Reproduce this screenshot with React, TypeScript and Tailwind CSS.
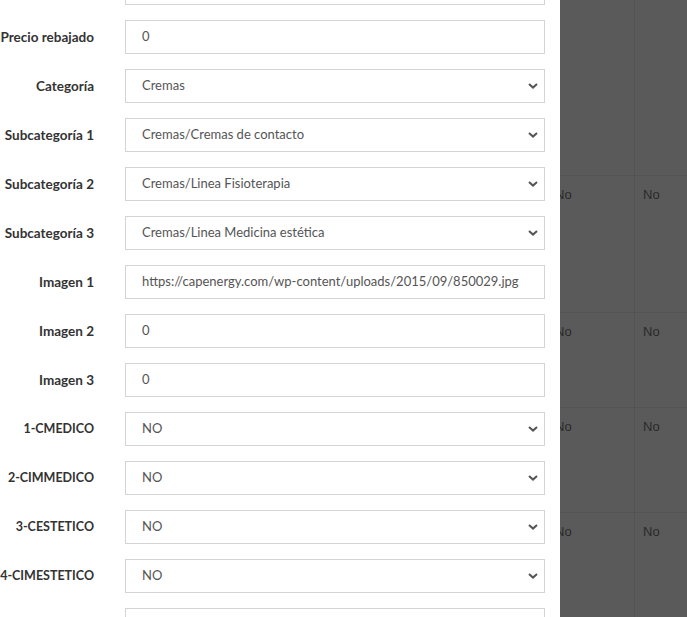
import React from "react";

type Field = { label: string; value: string; select?: boolean; caps?: boolean };

const fields: Field[] = [
  { label: "", value: "" },
  { label: "Precio rebajado", value: "0" },
  { label: "Categoría", value: "Cremas", select: true },
  { label: "Subcategoría 1", value: "Cremas/Cremas de contacto", select: true },
  { label: "Subcategoría 2", value: "Cremas/Linea Fisioterapia", select: true },
  { label: "Subcategoría 3", value: "Cremas/Linea Medicina estética", select: true },
  { label: "Imagen 1", value: "https://capenergy.com/wp-content/uploads/2015/09/850029.jpg" },
  { label: "Imagen 2", value: "0" },
  { label: "Imagen 3", value: "0" },
  { label: "1-CMEDICO", value: "NO", select: true, caps: true },
  { label: "2-CIMMEDICO", value: "NO", select: true, caps: true },
  { label: "3-CESTETICO", value: "NO", select: true, caps: true },
  { label: "4-CIMESTETICO", value: "NO", select: true, caps: true },
  { label: "", value: "" },
];

// rows of the table behind the overlay (heights in px, text or not)
const tableRows = [
  { h: "h-[175px]", text: false },
  { h: "h-[137px]", text: true },
  { h: "h-[95px]", text: true },
  { h: "h-[105px]", text: true },
  { h: "h-[110px]", text: true },
];

function Chevron() {
  return (
    <svg width="10" height="6" viewBox="0 0 10 6" className="shrink-0">
      <path d="M1 1l4 3.6L9 1" fill="none" stroke="#555" strokeWidth="2" />
    </svg>
  );
}

export default function App() {
  return (
    <div className="relative h-[617px] w-full overflow-hidden bg-[#5a5a5a]">
      {/* ── Table behind the modal backdrop ── */}
      <div className="ml-[547px] flex flex-col font-['Liberation_Sans',Arial,sans-serif] text-[13px] text-[#2a2a2a]">
        {tableRows.map((row, i) => (
          <div key={i} className={`flex ${row.h} border-t border-[#535353] first:border-t-0`}>
            <div className="w-[87px] shrink-0 pl-2 pt-[9px]">{row.text ? "No" : ""}</div>
            <div className="w-[100px] shrink-0 border-l border-[#535353] pl-2 pt-[9px]">{row.text ? "No" : ""}</div>
          </div>
        ))}
      </div>

      {/* ── Modal panel ── */}
      <div className="absolute left-0 top-0 h-full w-[560px] overflow-hidden bg-white font-['Lato','Open_Sans',sans-serif]">
        <div className="mt-[-29px] flex flex-col gap-[15px]">
          {fields.map((f, i) => (
            <div key={i} className="flex items-center">
              <div className="flex w-[94px] shrink-0 justify-end">
                <span
                  className={`whitespace-nowrap font-bold text-[#333] ${f.caps ? "text-[12.5px]" : "text-[13.5px]"}`}
                >
                  {f.label}
                </span>
              </div>
              <div className="ml-[31px] flex h-[34px] w-[420px] items-center justify-between border border-[#d2d4d6] pb-px pl-4 pr-[6px] text-[13px] text-[#555]">
                <span className="whitespace-nowrap">{f.value}</span>
                {f.select && <Chevron />}
              </div>
            </div>
          ))}
        </div>
      </div>
    </div>
  );
}
